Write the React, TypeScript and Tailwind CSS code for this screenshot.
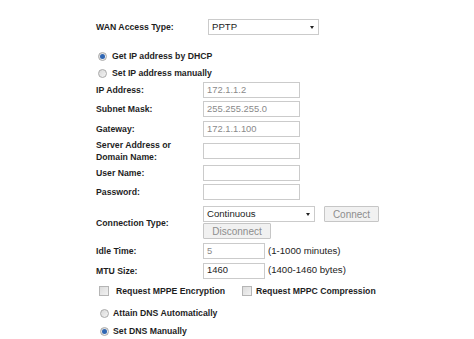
const Radio = ({ checked }: { checked?: boolean }) => (
  <span className="w-[9px] h-[9px] rounded-full border border-[#a9a9a9] bg-gradient-to-br from-[#d8d8d8] to-[#f4f4f4] flex items-center justify-center shrink-0">
    {checked && <span className="w-[5px] h-[5px] rounded-full bg-[#2f66b3]" />}
  </span>
);

const Checkbox = () => (
  <span className="w-[10px] h-[10px] border border-[#b5b5b5] bg-gradient-to-br from-[#dcdcdc] to-[#f2f2f2] shrink-0" />
);

const Label = ({ children, className = "w-[107px]" }: { children: React.ReactNode; className?: string }) => (
  <div className={`${className} shrink-0 text-[8.7px] font-bold text-[#1e1e1e] leading-[12px]`}>{children}</div>
);

const Input = ({ value = "", dim, w = "w-[97px]" }: { value?: string; dim?: boolean; w?: string }) => (
  <div
    className={`${w} h-[16px] border border-[#cbcbcb] bg-white px-[3px] flex items-center text-[9.4px] ${
      dim ? "text-[#8a8a8a]" : "text-[#222]"
    }`}
  >
    {value}
  </div>
);

const Select = ({ value, w }: { value: string; w: string }) => (
  <div className={`${w} h-[16px] border border-[#cbcbcb] bg-white pl-[3px] pr-[4px] flex items-center justify-between text-[9.6px] text-[#222]`}>
    <span>{value}</span>
    <span className="w-0 h-0 border-l-[2.5px] border-r-[2.5px] border-t-[3px] border-l-transparent border-r-transparent border-t-[#222]" />
  </div>
);

const Button = ({ children, w }: { children: React.ReactNode; w: string }) => (
  <div className={`${w} h-[16px] border border-[#c6c6c6] bg-[#f1f1f1] rounded-[1px] flex items-center justify-center text-[10px] text-[#8d8d8d]`}>
    {children}
  </div>
);

export default function App() {
  return (
    <div className="w-[474px] h-[339px] bg-white pl-[96px] overflow-hidden" style={{ fontFamily: '"Liberation Sans", Arial, sans-serif' }}>
      <div className="flex flex-col">
        {/* WAN type */}
        <div className="mt-[19px] h-[16px] flex items-center">
          <Label className="w-[112px]">WAN Access Type:</Label>
          <Select value="PPTP" w="w-[111px]" />
        </div>

        {/* IP mode */}
        <div className="mt-[14px] h-[14px] flex items-center gap-[5px] pl-[2px]">
          <Radio checked />
          <Label className="">Get IP address by DHCP</Label>
        </div>
        <div className="mt-[3px] h-[14px] flex items-center gap-[5px] pl-[2px]">
          <Radio />
          <Label className="">Set IP address manually</Label>
        </div>

        <div className="mt-[2px] h-[16px] flex items-center">
          <Label>IP Address:</Label>
          <Input value="172.1.1.2" dim />
        </div>
        <div className="mt-[3px] h-[16px] flex items-center">
          <Label>Subnet Mask:</Label>
          <Input value="255.255.255.0" dim />
        </div>
        <div className="mt-[4px] h-[16px] flex items-center">
          <Label>Gateway:</Label>
          <Input value="172.1.1.100" dim />
        </div>
        <div className="mt-[2px] h-[24px] flex items-center">
          <Label>
            Server Address or
            <br />
            Domain Name:
          </Label>
          <Input />
        </div>
        <div className="mt-[2px] h-[16px] flex items-center">
          <Label>User Name:</Label>
          <Input />
        </div>
        <div className="mt-[3px] h-[16px] flex items-center">
          <Label>Password:</Label>
          <Input />
        </div>

        {/* connection type */}
        <div className="mt-[6px] flex items-center">
          <Label>Connection Type:</Label>
          <div className="flex flex-col gap-[1px]">
            <div className="flex items-center gap-[9px]">
              <Select value="Continuous" w="w-[112px]" />
              <Button w="w-[55px]">Connect</Button>
            </div>
            <Button w="w-[68px]">Disconnect</Button>
          </div>
        </div>

        <div className="mt-[4px] h-[16px] flex items-center">
          <Label>Idle Time:</Label>
          <Input value="5" dim w="w-[62px]" />
          <span className="ml-[3px] text-[9.6px] text-[#222]">(1-1000 minutes)</span>
        </div>
        <div className="mt-[3px] h-[17px] flex items-center">
          <Label>MTU Size:</Label>
          <Input value="1460" w="w-[62px]" />
          <span className="ml-[3px] text-[9.6px] text-[#222]">(1400-1460 bytes)</span>
        </div>

        {/* options */}
        <div className="mt-[6px] h-[12px] flex items-center pl-[3px]">
          <Checkbox />
          <Label className="ml-[7px] w-[126px]">Request MPPE Encryption</Label>
          <Checkbox />
          <Label className="ml-[4px]">Request MPPC Compression</Label>
        </div>

        <div className="mt-[9px] h-[14px] flex items-center gap-[4px] pl-[4px]">
          <Radio />
          <Label className="">Attain DNS Automatically</Label>
        </div>
        <div className="mt-[4px] h-[14px] flex items-center gap-[4px] pl-[4px]">
          <Radio checked />
          <Label className="">Set DNS Manually</Label>
        </div>
      </div>
    </div>
  );
}
